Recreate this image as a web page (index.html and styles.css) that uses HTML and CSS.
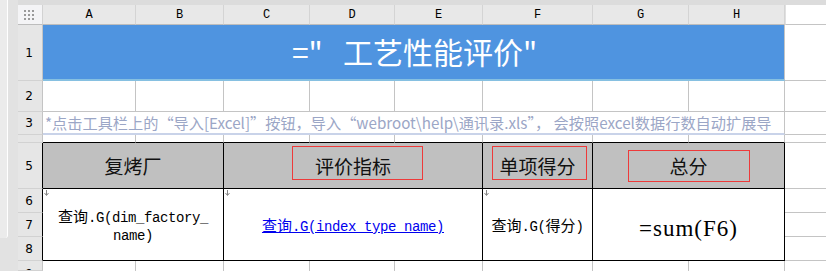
FILE: index.html
```html
<!DOCTYPE html>
<html>
<head>
<meta charset="utf-8">
<link rel="stylesheet" href="styles.css">
</head>
<body>
<div class="sheet">
  <div class="leftstrip"><div class="scroll"></div></div>
  <div class="topstrip"></div>

  <div class="corner">
    <svg width="10" height="10" viewBox="0 0 10 10"><g fill="#9a9a9a">
      <rect x="0" y="0" width="2" height="2"/><rect x="4" y="0" width="2" height="2"/><rect x="8" y="0" width="2" height="2"/>
      <rect x="0" y="4" width="2" height="2"/><rect x="4" y="4" width="2" height="2"/><rect x="8" y="4" width="2" height="2"/>
      <rect x="0" y="8" width="2" height="2"/><rect x="4" y="8" width="2" height="2"/><rect x="8" y="8" width="2" height="2"/>
    </g></svg>
  </div>
  <div class="colhead">A</div><div class="colhead">B</div><div class="colhead">C</div><div class="colhead">D</div>
  <div class="colhead">E</div><div class="colhead">F</div><div class="colhead">G</div><div class="colhead">H</div>
  <div class="colrest"></div>

  <!-- row 1 -->
  <div class="rowhead">1</div>
  <div class="title">="   工艺性能评价"</div>
  <div class="c rest blueline"></div>

  <!-- row 2 -->
  <div class="rowhead">2</div>
  <div class="c"></div><div class="c"></div><div class="c"></div><div class="c"></div>
  <div class="c"></div><div class="c"></div><div class="c"></div><div class="c"></div>
  <div class="c rest"></div>

  <!-- row 3 -->
  <div class="rowhead">3</div>
  <div class="note">*点击工具栏上的“导入[Excel]”按钮，导入“webroot\help\通讯录.xls”， 会按照excel数据行数自动扩展导</div>
  <div class="c rest"></div>

  <!-- row 4 -->
  <div class="rowhead"></div>
  <div class="c tb"></div><div class="c tb"></div><div class="c tb"></div><div class="c tb"></div>
  <div class="c tb"></div><div class="c tb"></div><div class="c tb"></div><div class="c tb"></div>
  <div class="c rest"></div>

  <!-- row 5 -->
  <div class="rowhead blk">5</div>
  <div class="th ab">复烤厂</div>
  <div class="th ce"><span class="rbox rb1"></span>评价指标</div>
  <div class="th f"><span class="rbox rb2"></span>单项得分</div>
  <div class="th gh"><span class="rbox rb3"></span>总分</div>
  <div class="c rest"></div>

  <!-- rows 6-8 -->
  <div class="rowhead blk r6">6</div>
  <div class="rowhead blk r7">7</div>
  <div class="rowhead blk r8">8</div>
  <div class="td ab2"><svg class="mark" width="5" height="6" viewBox="0 0 5 6"><path d="M2.5 0V5M0.5 3L2.5 5.5L4.5 3" stroke="#888" stroke-width="1" fill="none"/></svg><div class="mono"><span class="cj">查询</span>.G(dim_factory_<br>name)</div></div>
  <div class="td ce2"><svg class="mark" width="5" height="6" viewBox="0 0 5 6"><path d="M2.5 0V5M0.5 3L2.5 5.5L4.5 3" stroke="#888" stroke-width="1" fill="none"/></svg><div class="mono link"><span class="cj">查询</span>.G(index_type_name)</div></div>
  <div class="td f2"><svg class="mark" width="5" height="6" viewBox="0 0 5 6"><path d="M2.5 0V5M0.5 3L2.5 5.5L4.5 3" stroke="#888" stroke-width="1" fill="none"/></svg><div class="mono"><span class="cj">查询</span>.G(<span class="cj">得分</span>)</div></div>
  <div class="td gh2"><div class="formula">=sum(F6)</div></div>
  <div class="c rest r6"></div>
  <div class="c rest r7"></div>
  <div class="c rest r8"></div>

  <!-- row 9 -->
  <div class="rowhead last">9</div>
  <div class="c last"></div><div class="c last"></div><div class="c last"></div><div class="c last"></div>
  <div class="c last"></div><div class="c last"></div><div class="c last"></div><div class="c last"></div>
  <div class="c rest last"></div>
</div>
</body>
</html>
```

FILE: styles.css
```css
html, body { margin: 0; padding: 0; background: #fff; }
body { width: 826px; height: 271px; overflow: hidden; font-family: "Noto Sans CJK SC", sans-serif; }

.sheet {
  display: grid;
  grid-template-columns: 18px 25px 93px 88px 86px 85px 88px 110px 96px 96px 41px;
  grid-template-rows: 5px 20px 56px 31px 23px 8px 46px 24px 24px 24px 10px;
  width: 826px;
  height: 271px;
  overflow: hidden;
}
.sheet > div { box-sizing: border-box; min-width: 0; min-height: 0; }

.leftstrip { grid-column: 1; grid-row: 1 / -1; background: #e2e2e2; }
.leftstrip .scroll { width: 8px; height: 238px; box-sizing: border-box; background: #ebebeb; border-right: 1px solid #fff; border-bottom-right-radius: 3px; }
.topstrip { grid-column: 2 / -1; grid-row: 1; background: #dcdcdc; }

.corner { grid-column: 2; grid-row: 2; background: #f4f4f6; border-right: 1px solid #d2d2d2; border-bottom: 1px solid #bdbdbd; display: flex; align-items: center; justify-content: center; padding-right: 2px; }
.colhead { grid-row: 2; background: #e8e8e8; border-right: 1px solid #d4d4d4; border-bottom: 1px solid #bdbdbd; font-family: "Liberation Mono", monospace; font-size: 12px; color: #000; display: flex; align-items: center; justify-content: center; padding-top: 1px; }
.colrest { grid-row: 2; grid-column: 11; background: #fff; border-bottom: 1px solid #c4c4c4; border-left: 1px solid #e0e0e0; }

.rowhead { grid-column: 2; background: #e6e6e6; border-right: 1px solid #c4c4c4; border-bottom: 1px solid #d2d2d2; font-family: "DejaVu Sans", sans-serif; font-size: 12px; color: #000; display: flex; align-items: center; justify-content: center; padding-right: 2px; }
.rowhead.blk { border-right-color: #000; }
.rowhead.r6 { grid-row: 8; }
.rowhead.r7 { grid-row: 9; }
.rowhead.r8 { grid-row: 10; }
.rowhead.last { align-items: flex-start; padding-top: 6px; overflow: hidden; }

.c { border-right: 1px solid #c4c4c4; border-bottom: 1px solid #c4c4c4; background: #fff; }
.c.rest { grid-column: 11; border-right: none; }
.c.rest.r6 { grid-row: 8; }
.c.rest.r7 { grid-row: 9; }
.c.rest.r8 { grid-row: 10; }
.c.tb { border-bottom-color: #000; }
.c.last { border-bottom: none; }

.title { grid-column: 3 / 11; background: #4f94e0; border-bottom: 2px solid #86c0e1; border-right: 1px solid #c4c4c4; color: #fff; font-size: 30px; display: flex; align-items: center; justify-content: center; white-space: pre; padding-bottom: 3px; padding-left: 2px; }
.blueline { border-bottom: 1px solid #c4c4c4; }

.note { grid-column: 3 / 11; border-right: 1px solid #c4c4c4; border-bottom: 2px solid #c9d3e9; color: #9ba6c6; font-size: 15.2px; line-height: 21px; white-space: pre; overflow: hidden; padding-left: 2px; }

.th { grid-row: 7; background: #c0c0c0; border-right: 1px solid #000; border-bottom: 1px solid #000; font-size: 19px; color: #111; display: flex; align-items: center; justify-content: center; position: relative; }
.th.ab { grid-column: 3 / 5; }
.th.ce { grid-column: 5 / 8; }
.th.f { grid-column: 8; }
.th.gh { grid-column: 9 / 11; }

.rbox { position: absolute; border: 1px solid #ee3a3a; box-sizing: border-box; }
.rb1 { left: 68px; top: 3px; width: 131px; height: 34px; }
.rb2 { left: 9px; top: 3px; width: 95px; height: 34px; }
.rb3 { left: 35px; top: 7px; width: 122px; height: 32px; }

.td { grid-row: 8 / 11; background: #fff; border-right: 1px solid #000; border-bottom: 1px solid #000; display: flex; align-items: center; justify-content: center; position: relative; text-align: center; }
.td.ab2 { grid-column: 3 / 5; }
.td.ce2 { grid-column: 5 / 8; }
.td.f2 { grid-column: 8; }
.td.gh2 { grid-column: 9 / 11; }
.mark { position: absolute; left: 1px; top: 1px; }

.mono { font-family: "Liberation Mono", "Noto Sans CJK SC", monospace; font-size: 14px; letter-spacing: -0.4px; line-height: 18px; color: #000; padding-top: 3px; }
.mono .cj { font-family: "Noto Sans CJK SC", sans-serif; font-size: 15px; letter-spacing: 0; }
.link { color: #0000ee; text-decoration: underline; }
.formula { font-family: "Liberation Serif", serif; font-size: 23px; letter-spacing: 1px; color: #000; padding-top: 8px; }
```
